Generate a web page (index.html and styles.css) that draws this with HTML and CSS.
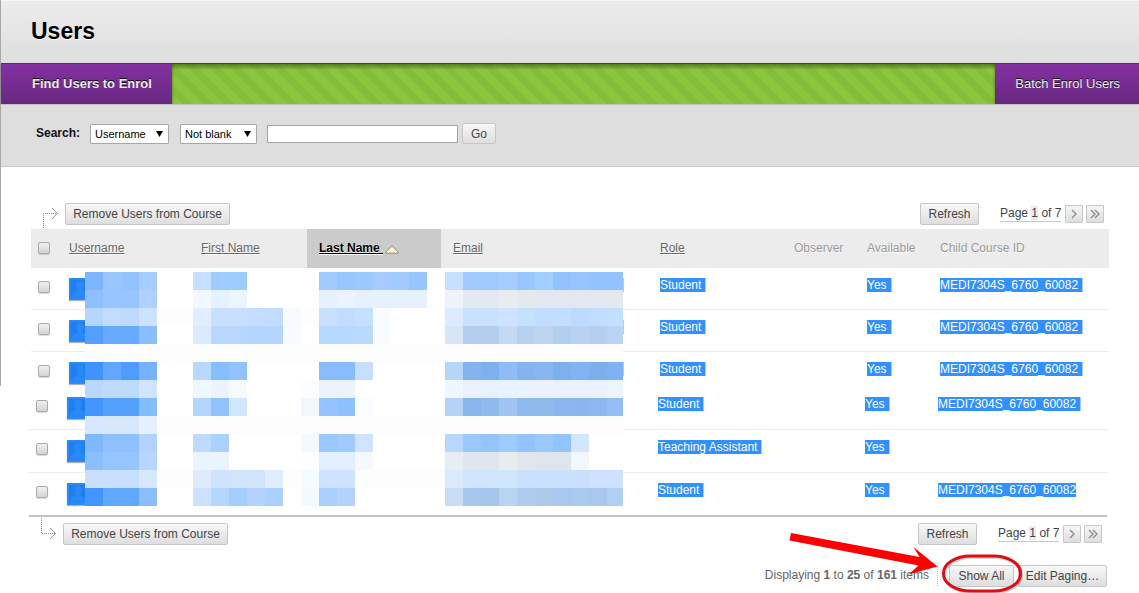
FILE: index.html
```html
<!DOCTYPE html>
<html lang="en">
<head>
<meta charset="utf-8">
<title>Users</title>
<link rel="stylesheet" href="styles.css">
</head>
<body>
<svg class="defs" aria-hidden="true">
  <symbol id="next" viewBox="0 0 16 16"><path d="M6 4l4 4-4 4" fill="none" stroke="#8a8a8a" stroke-width="1.3"/></symbol>
  <symbol id="last" viewBox="0 0 16 16"><path d="M4 4l4 4-4 4M8 4l4 4-4 4" fill="none" stroke="#8a8a8a" stroke-width="1.3"/></symbol>
  <symbol id="avatar" viewBox="0 0 22 22">
    <path d="M0 0h22v22H0z" fill="#2b8afb"/><path d="M2 2h18v17H2z" fill="#1f7fee"/>
    <path d="M11 2.500c3 0 4.500 2.500 4 5.500-.3 2-1.200 3-1.500 4 0 2 5 1.500 5.500 5v2H3v-2c.5-3.500 5.500-3 5.500-5-.3-1-1.200-2-1.500-4-.5-3 1-5.500 4-5.500z" fill="#2989fa" stroke="#2483f2" stroke-width=".6"/>
  </symbol>
  <symbol id="drop" viewBox="0 0 7 6"><path d="M0 0h7L3.500 6z" fill="#000"/></symbol>
</svg>
<div class="page">
  <header class="title-bar"><h1>Users</h1></header>
  <nav class="action-bar">
    <a class="tab tab-main" href="#">Find Users to Enrol</a>
    <a class="tab" href="#">Batch Enrol Users</a>
  </nav>
  <form class="search" onsubmit="return false">
    <label class="search-label" for="field">Search:</label>
    <span class="pick pick-field"><select id="field"><option>Username</option></select><svg><use href="#drop"/></svg></span>
    <span class="pick pick-op"><select aria-label="Condition"><option>Not blank</option></select><svg><use href="#drop"/></svg></span>
    <input class="term" type="text" aria-label="Search text">
    <button class="btn btn-go">Go</button>
  </form>

  <main>
    <div class="tools tools-top">
      <svg class="elbow" width="20" height="22" viewBox="0 0 20 22" fill="none" stroke="#888"><path d="M4.500 21V6.500H18" stroke-dasharray="1 1"/><path d="M13 1l5.500 5.500L13 12" stroke-width=".9"/></svg>
      <button class="btn">Remove Users from Course</button>
      <button class="btn refresh">Refresh</button>
      <span class="pager">Page <b>1</b> of 7</span>
      <button class="step" aria-label="Next page"><svg><use href="#next"/></svg></button>
      <button class="step" aria-label="Last page"><svg><use href="#last"/></svg></button>
    </div>

    <div class="list">
      <table>
        <colgroup><col class="c-check"><col class="c-user"><col class="c-first"><col class="c-last"><col class="c-email"><col class="c-role"><col class="c-obs"><col class="c-avail"><col></colgroup>
        <thead><tr>
          <th><input type="checkbox" aria-label="Select all"></th>
          <th><a href="#">Username</a></th><th><a href="#">First Name</a></th>
          <th class="sorted"><a href="#">Last Name&nbsp;</a><svg width="14" height="9" viewBox="0 0 14 9"><path d="M7 .8L13.200 7v1.200H.8V7z" fill="#fff3cf" stroke="#8c8468" stroke-width=".9"/></svg></th>
          <th><a href="#">Email</a></th><th><a href="#">Role</a></th><th>Observer</th><th>Available</th><th>Child Course ID</th>
        </tr></thead>
        <tbody>
          <tr><td><input type="checkbox" aria-label="Select user 1"></td><td><svg class="avatar"><use href="#avatar"/></svg></td><td></td><td></td><td></td><td><mark>Student</mark></td><td></td><td><mark>Yes</mark></td><td><mark>MEDI7304S_6760_60082</mark></td></tr>
          <tr><td><input type="checkbox" aria-label="Select user 2"></td><td><svg class="avatar"><use href="#avatar"/></svg></td><td></td><td></td><td></td><td><mark>Student</mark></td><td></td><td><mark>Yes</mark></td><td><mark>MEDI7304S_6760_60082</mark></td></tr>
          <tr class="cut"><td><input type="checkbox" aria-label="Select user 3"></td><td><svg class="avatar"><use href="#avatar"/></svg></td><td></td><td></td><td></td><td><mark>Student</mark></td><td></td><td><mark>Yes</mark></td><td><mark>MEDI7304S_6760_60082</mark></td></tr>
        </tbody>
      </table>
      <table class="lower">
        <colgroup><col class="c-check"><col class="c-user"><col class="c-first"><col class="c-last"><col class="c-email"><col class="c-role"><col class="c-obs"><col class="c-avail"><col></colgroup>
        <tbody>
          <tr><td><input type="checkbox" aria-label="Select user 4"></td><td><svg class="avatar"><use href="#avatar"/></svg></td><td></td><td></td><td></td><td><mark>Student</mark></td><td></td><td><mark>Yes</mark></td><td><mark>MEDI7304S_6760_60082</mark></td></tr>
          <tr><td><input type="checkbox" aria-label="Select user 5"></td><td><svg class="avatar"><use href="#avatar"/></svg></td><td></td><td></td><td></td><td><mark>Teaching Assistant</mark></td><td></td><td><mark>Yes</mark></td><td></td></tr>
          <tr><td><input type="checkbox" aria-label="Select user 6"></td><td><svg class="avatar"><use href="#avatar"/></svg></td><td></td><td></td><td></td><td><mark>Student</mark></td><td></td><td><mark>Yes</mark></td><td><mark class="end">MEDI7304S_6760_60082</mark></td></tr>
        </tbody>
      </table>
      <svg class="mosaic" id="mosaic" width="539" height="236" viewBox="0 0 539 236" shape-rendering="crispEdges" aria-hidden="true"></svg>
    </div>

    <div class="bottom">
      <div class="tools tools-bottom">
        <svg class="elbow" width="20" height="22" viewBox="0 0 20 22" fill="none" stroke="#888"><path d="M4.500 0V15.500H18" stroke-dasharray="1 1"/><path d="M13 10l5.500 5.500L13 21" stroke-width=".9"/></svg>
        <button class="btn">Remove Users from Course</button>
        <button class="btn refresh">Refresh</button>
        <span class="pager">Page <b>1</b> of 7</span>
        <button class="step" aria-label="Next page"><svg><use href="#next"/></svg></button>
        <button class="step" aria-label="Last page"><svg><use href="#last"/></svg></button>
      </div>
      <div class="paging">
        <span class="count">Displaying <strong>1</strong> to <strong>25</strong> of <strong>161</strong> items</span>
        <button class="btn show-all">Show All</button>
        <button class="btn edit">Edit Paging…</button>
      </div>
      <svg class="callout" width="240" height="66" viewBox="785 527 240 66" aria-hidden="true">
        <rect x="944.500" y="557.500" width="77" height="35" rx="27" ry="17" fill="none" stroke="#000" stroke-opacity=".18" stroke-width="3"/>
        <rect x="943.500" y="556" width="77" height="35" rx="27" ry="17" fill="none" stroke="#dc1014" stroke-width="3"/>
        <path d="M791 533l128.500 24-6-10 24 19.500-29 8 10-9-129-25z" fill="#f00"/>
      </svg>
    </div>
  </main>
</div>
<script src="mosaic.js"></script>
</body>
</html>
```
FILE: mosaic.js
```js
// Pixelated privacy mask: each row lists "column:span:colour" on an 18px grid.
const cell = 18, width = 538;
const rows = [
  "0:1:7db5ff 1:1:99c6ff 2:1:94c2ff 3:1:a6cdff 6:1:c6e0ff 7:2:9dcbff 13:1:a0cbff 14:1:9ac6ff 15:1:9ac8ff 16:1:a6ccff 17:1:a1caff 18:1:97c6ff 20:1:c6dffe 21:2:9fcaff 23:1:a4ceff 24:1:9ac6ff 25:1:a1ceff 26:1:93c1ff 27:1:97c4ff 28:2:92c2ff",
  "0:1:8ebfff 1:2:98c5ff 3:1:aed1ff 6:1:f1f8ff 7:1:e6f1ff 8:1:ecf5ff 13:1:e6f1ff 14:1:ebf3ff 15:4:e5f1ff 20:1:eff3f9 21:2:e3e8f2 23:1:e8ecf0 24:1:e4eaec 25:5:e3e8f0",
  "0:1:b5d6ff 1:1:c0dcff 2:1:bedaff 3:1:cce2ff 4:9:fdfdfd 6:1:e0eeff 7:2:c8dfff 9:1:c5deff 10:1:c1dcff 11:1:f7fbff 13:1:c9dfff 14:1:c0ddff 15:1:c5dfff 16:1:f8fcff 20:1:dcebff 21:2:cae0ff 23:1:cfe2ff 24:1:c6e0ff 25:1:c2dcff 26:1:c2deff 27:1:bddbff 28:1:c1dcff 29:1:c3deff",
  "0:1:539fff 1:2:66abff 3:1:8abdff 6:1:daeaff 7:2:b7d7ff 9:2:b4d5ff 11:1:f7fbff 13:2:b7d8ff 15:1:bad9ff 16:1:f8fcff 20:1:d7e6f7 21:2:b3ceef 23:1:c4d9f4 24:1:b9d1f0 25:1:bfd5ef 26:1:b3cfee 27:1:b9d2f1 28:1:b4cfef 29:1:b8d3f3",
  "0:30:fdfdfd",
  "0:1:3e93ff 1:1:60a7ff 2:1:4e9cff 3:1:76b2ff 6:1:b8d8ff 7:1:86bfff 8:1:91c2ff 13:1:88bcff 14:1:87bdff 15:1:c7dfff 20:1:b7d5f8 21:1:85b3f0 22:1:7db0f1 23:1:91bbf4 24:1:84b4ef 25:1:88b7ef 26:1:7db0ef 27:1:80b2f4 28:1:7cafee 29:1:7eb2f3",
  "0:1:bad8ff 1:2:bedbff 3:1:cfe4ff 6:1:f0f7ff 7:1:ebf3ff 8:1:f6faff 12:1:fbfdff 13:2:ebf3ff 20:1:eef7ff 21:1:e9f1fd 22:2:e6f2ff 24:5:eaf2ff 29:1:ecf5ff",
  "0:1:4296ff 1:2:54a0ff 3:1:83bbff 6:1:b4d5ff 7:1:92c1ff 8:1:d1e6ff 12:1:f0f8ff 13:1:93c4ff 14:1:8dc0ff 15:1:fafcff 20:1:b5d3f5 21:1:87b5ec 22:1:90b9ec 23:1:9fc3f2 24:2:91baec 26:1:8db7ec 27:1:8ab6ed 28:1:8eb7ed 29:1:94bff4",
  "0:1:d7e7ff 1:2:d8e8fb 3:1:e5effd 4:26:fdfdfd",
  "0:1:80b8ff 1:2:8fc0ff 3:1:b2d3ff 6:1:bddaff 7:1:abd1ff 12:1:f3faff 13:1:99c7ff 14:1:9fcbff 15:1:d0e4ff 20:1:b8d7ff 21:1:99c7ff 22:1:96c4ff 23:1:9ecaff 24:1:94c3ff 25:1:9bc8ff 26:1:92c4ff 27:1:d3e5ff",
  "0:1:8bbeff 1:2:95c4ff 3:1:b6d6ff 6:2:ebf3ff 12:1:fcfeff 13:2:e2efff 15:1:f4f8ff 20:1:e8edf1 21:2:e0e6ef 23:1:e7ecef 24:1:e1e7ed 25:2:dfe5ed 27:1:f2f6fd",
  "0:1:c9ddfc 1:2:c7dffc 3:1:d7e8fc 4:16:fdfdfd 6:1:dfeaff 7:1:cfe3ff 8:2:d0e5fc 10:1:dfecff 12:1:f5fbff 13:2:cde3ff 20:1:daeafc 21:3:d2e5ff 24:1:c9e0ff 25:2:cae0ff 27:1:c9dfff 28:2:cce2ff",
  "0:1:4297ff 1:2:60a7ff 3:1:8bbeff 6:1:cce1ff 7:1:b4d6ff 8:1:a4ceff 9:1:b2d2ff 10:1:abd0ff 12:1:f3faff 13:1:aacfff 14:1:b2d3ff 20:1:c9def4 21:1:a7c8ee 22:1:a5c7ed 23:1:b9d4f2 24:1:afcbf0 25:1:adcaeb 26:1:a8c8ef 27:1:aacbf0 28:1:aac7ed 29:1:b1d0f4"
];
const mask = document.getElementById("mosaic");
function block(x, y, w, h, fill) {
  const r = document.createElementNS("http://www.w3.org/2000/svg", "rect");
  for (const [k, v] of Object.entries({ x, y, width: w, height: h, fill })) r.setAttribute(k, v);
  mask.append(r);
}
block(0, 0, width, 236, "#fff");
rows.forEach((row, i) => row.split(" ").forEach(item => {
  const [col, span, colour] = item.split(":");
  const x = col * cell;
  block(x, i * cell, Math.min(span * cell, width - x), cell, "#" + colour);
}));
[6, 48, 90].forEach(y => block(width, y, 1, 14, "#a4caff"));
```
FILE: styles.css
```css
* { box-sizing: border-box; }
body { margin: 0; background: #fff; color: #444; font: 12px/14px "Liberation Sans", Arial, sans-serif; }
.defs { display: none; }
.page { position: relative; }
.page::before { content: ""; position: absolute; left: 0; top: 0; width: 1px; height: 386px; background: #a8a8a8; }
button, input, select { font-family: inherit; margin: 0; }

.title-bar { margin-left: 1px; height: 63px; padding: 17px 30px 0; border-top: 1px solid #f8f8f8; background: linear-gradient(#ececec, #dedede); }
h1 { margin: 0; color: #000; font-size: 23px; line-height: 26px; text-shadow: 0 1px 0 #fff; }
.action-bar { display: flex; justify-content: space-between; margin-left: 1px; height: 42px; border-top: 1px solid #5e2a6c; border-bottom: 1px solid #c2c2c2;
  background: linear-gradient(rgba(50,80,10,.6), rgba(50,80,10,0) 6px), repeating-linear-gradient(45deg, #8cc63f 0 8px, #84bd3b 8px 15px); }
.tab { padding: 12px 19px 0 20px; background: linear-gradient(#8430a2, #672880); color: #eee; font-size: 13px; line-height: 16px; text-decoration: none; text-shadow: 0 -1px 0 #000; box-shadow: 0 0 3px rgba(0,0,0,.4); clip-path: inset(0 -3px 0 -3px); }
.tab-main { padding: 12px 20px 0 31px; font-weight: bold; }

.search { display: flex; align-items: center; height: 62px; margin-left: 1px; padding: 0 35px 4px; border-bottom: 1px solid #c8c8c8; background: #dedede; }
.search-label { width: 54px; padding-bottom: 2px; color: #111; font-weight: bold; }
.pick { position: relative; margin-right: 11px; }
.pick select { appearance: none; display: block; width: 100%; height: 20px; padding: 0 4px; border: 1px solid #a6a6a6; border-radius: 1px; background: #fff; color: #000; font-size: 11px; }
.pick svg { position: absolute; right: 6px; top: 7px; width: 7px; height: 6px; pointer-events: none; }
.pick-field { width: 79px; }
.pick-op { width: 77px; margin-right: 10px; }
.term { width: 191px; height: 18px; border: 1px solid #a6a6a6; background: #fff; }
.btn { height: 22px; padding: 0; border: 1px solid #c6c6c6; border-radius: 2px; background: linear-gradient(#f8f8f8, #dedede); color: #444; font-size: 12px; line-height: 18px; width: 165px; }
.btn-go { width: 34px; height: 21px; margin-left: 4px; }

main { padding: 36px 30px 0 31px; }
.tools { display: flex; align-items: flex-start; padding: 0 5px 4px 8px; }
.elbow { width: 20px; height: 22px; margin-right: 6px; }
.tools-top .elbow { margin-top: 4px; }
.tools-top { height: 26px; }
.refresh { width: 59px; margin-left: auto; }
.pager { margin: 3px 4px 0 21px; width: 61px; height: 16px; border-bottom: 1px solid #c8c8c8; white-space: nowrap; }
.pager b { font-weight: normal; background: #ececec; }
.step { width: 18px; height: 18px; margin: 2px 0 0; padding: 0; border: 1px solid #c6c6c6; border-radius: 1px; background: linear-gradient(#f6f6f6, #dedede); }
.step + .step { margin-left: 3px; }
.step svg { display: block; width: 16px; height: 16px; }

.list { position: relative; }
.mosaic { position: absolute; left: 54px; top: 43px; }
table { width: 100%; table-layout: fixed; border-collapse: separate; border-spacing: 0; }
.lower { margin-left: -2px; border-bottom: 2px solid #c2c2c2; }
.c-check { width: 26px; } .c-user { width: 132px; } .c-first { width: 118px; } .c-last { width: 134px; } .c-email { width: 207px; } .c-role { width: 134px; } .c-obs, .c-avail { width: 73px; }
th { height: 39px; padding: 0 0 2px 12px; background: #ececec; color: #999; font-weight: normal; text-align: left; text-shadow: 0 1px 0 #fff; white-space: nowrap; }
th a { color: #666; }
.sorted { background: #cbcbcb; font-weight: bold; }
.sorted a { color: #000; }
.sorted svg { margin-left: 2px; vertical-align: -2px; }
td { height: 42px; padding: 10px 0 0 12px; border-bottom: 1px solid #ececec; vertical-align: top; white-space: nowrap; }
th:first-child, td:first-child { padding-left: 7px; }
.cut td { height: 35px; border-bottom: 0; }
.lower td { height: 43px; }
.lower tr:last-child td { height: 42px; border-bottom: 0; }
th input, td input { appearance: none; display: block; width: 12px; height: 12px; border: 1px solid #aaa; border-radius: 2px; background: linear-gradient(#f0f0f0, #d4d4d4); box-shadow: 0 1px 1px rgba(0,0,0,.15); }
td input { margin-top: 3px; }
.avatar { display: block; width: 22px; height: 22px; box-shadow: 0 1px 1px rgba(0,0,0,.3); }
mark { display: inline-block; height: 14px; padding-right: 4px; border-right: 1px solid #a4caff; background: #3390ff; color: #fff; }
.end { padding-right: 0; border-right: 0; }

.bottom { position: relative; margin: 0 2px 0 -2px; }
.tools-bottom { padding-top: 6px; }
.tools-bottom .elbow { margin-top: -5px; }
.paging { display: flex; align-items: flex-start; justify-content: flex-end; padding: 16px 0 6px; color: #666; }
.count { padding: 5px 8px 4px 0; margin: -2px 11px 0 0; border-right: 1px dotted #bbb; }
.show-all { width: 65px; margin-right: 4px; }
.edit { width: 89px; }
.callout { position: absolute; right: 82px; top: 10px; pointer-events: none; }
```
